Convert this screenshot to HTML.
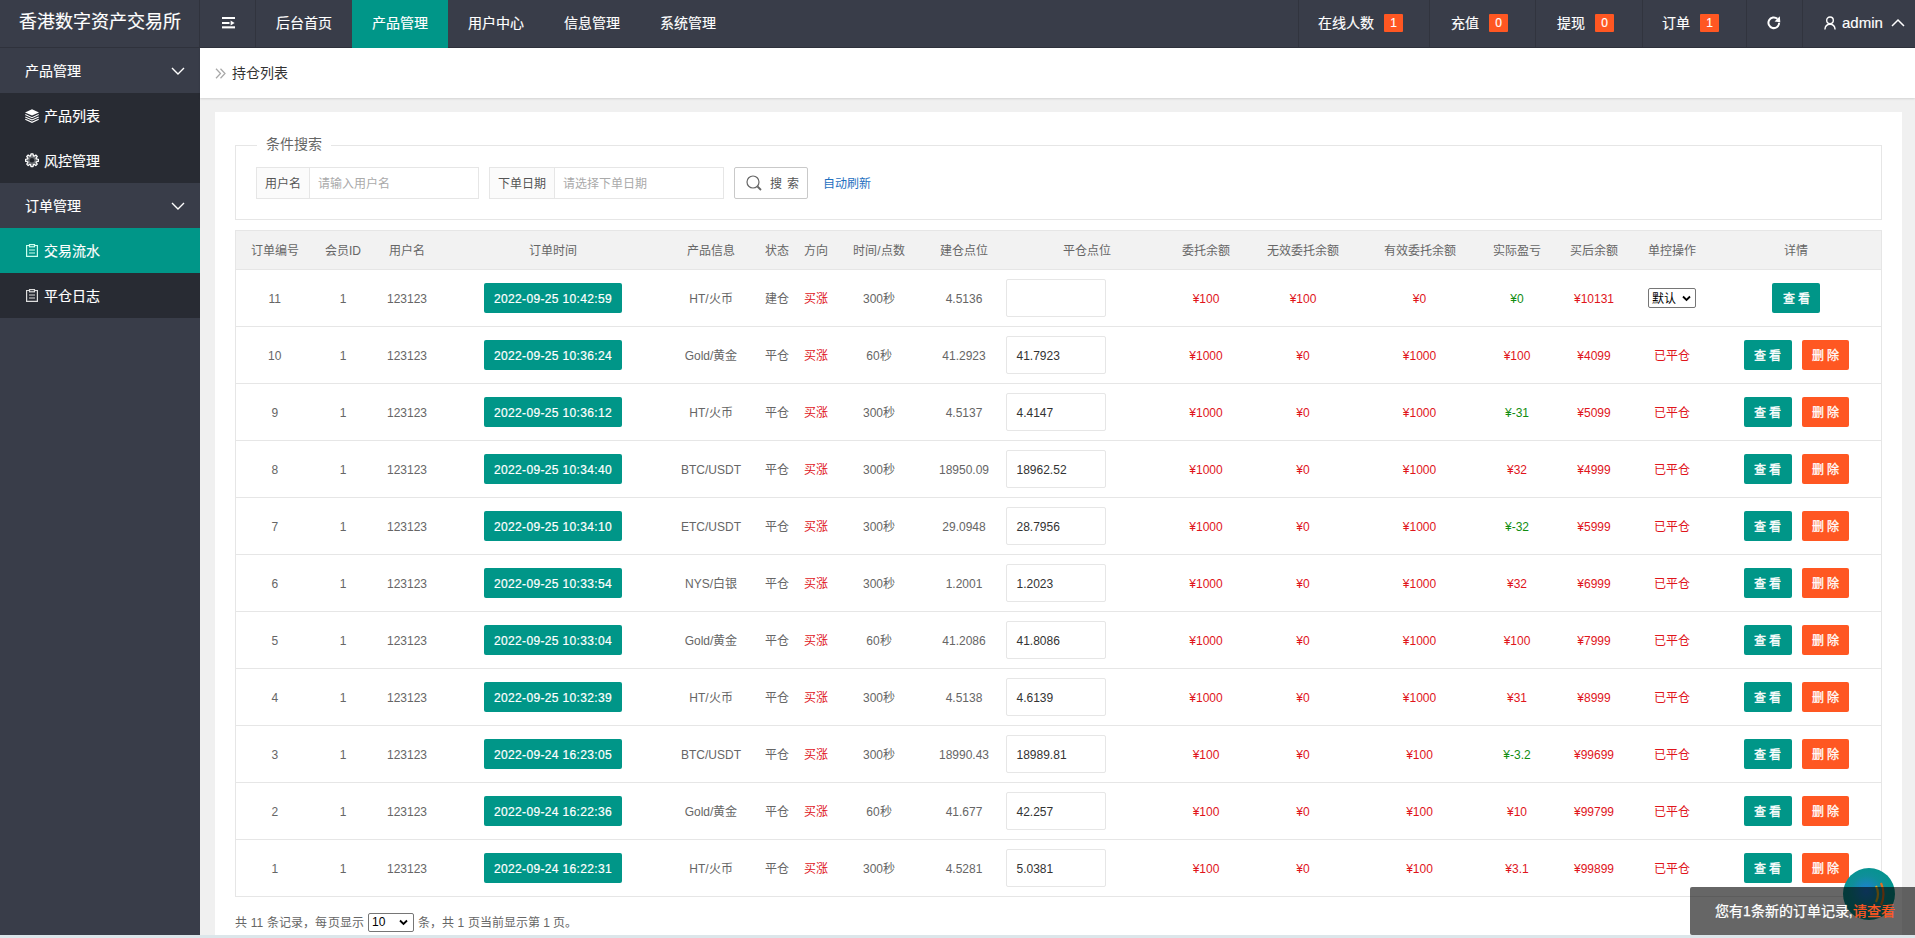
<!DOCTYPE html>
<html lang="zh-CN"><head><meta charset="utf-8">
<style>
*{box-sizing:border-box;margin:0;padding:0}
html,body{width:1915px;height:938px;overflow:hidden}
body{font-family:"Liberation Sans",sans-serif;background:#f0f0f0;position:relative;color:#666;font-size:12px}
td,th{line-height:16px}
.hdr{-webkit-text-stroke:0.15px #fff;position:absolute;left:0;top:0;width:1915px;height:48px;background:#393d49;border-bottom:1px solid #2f323c}
.logo{position:absolute;left:0;top:0;width:200px;height:47px;color:#fff;font-size:18px;line-height:45px;padding-left:19px;white-space:nowrap}
.hdr .sep{position:absolute;top:0;width:1px;height:47px;background:#31343e}
.nav{position:absolute;top:0;height:47px;color:#fff;font-size:14px;line-height:46px;text-align:center;white-space:nowrap}
.nav.on{background:#009688;height:48px}
.badge{position:absolute;top:14px;width:19px;height:18px;background:#ff5722;color:#fff;font-size:12px;line-height:18px;text-align:center;border-radius:1px}
.tx{position:absolute;top:0;line-height:46px;color:#fff;font-size:14px;white-space:nowrap}
.side{position:absolute;left:0;top:48px;width:200px;height:890px;background:#393d49}
.side .it{-webkit-text-stroke:0.15px #fff;position:absolute;left:0;width:200px;height:45px;line-height:47px;color:#fff;font-size:14px;padding-left:25px;white-space:nowrap}
.side .child{background:#282b33}
.side .on{background:#009688}
.side svg{position:absolute}
.crumb{position:absolute;left:200px;top:48px;width:1715px;height:50px;background:#fff;box-shadow:0 1px 2px rgba(0,0,0,.12)}
.crumb span{position:absolute;left:32px;top:1px;line-height:49px;font-size:14px;color:#333}
.card{position:absolute;left:215px;top:112px;width:1687px;height:830px;background:#fff}
.fs{position:absolute;left:20px;top:33px;width:1647px;height:75px;border:1px solid #e6e6e6}
.legend{position:absolute;left:42px;top:24px;background:#fff;padding:0 9px;font-size:14px;color:#666;line-height:17px}
.ig{position:absolute;top:55px;height:32px;border:1px solid #e6e6e6;font-size:12px}
.ig .lb{position:absolute;left:0;top:0;height:30px;line-height:32px;background:#fbfbfb;border-right:1px solid #e6e6e6;text-align:center;color:#555}
.ig .ph{position:absolute;top:0;line-height:32px;color:#aaa}
.sbtn{position:absolute;left:519px;top:55px;width:74px;height:32px;border:1px solid #c9c9c9;border-radius:2px;color:#555;font-size:13px;line-height:30px}
.auto{position:absolute;left:608px;top:56px;line-height:32px;color:#1e6fbf;font-size:12px}
table{position:absolute;left:20px;top:118px;border-collapse:collapse;table-layout:fixed;width:1647px}
td,th{text-align:center;padding:0;font-weight:normal;font-size:12px;color:#666;white-space:nowrap;border-bottom:1px solid #e6e6e6}
th{height:39px;background:#f2f2f2;padding-top:1px}
td{height:57px;padding-top:2px}
table{border:1px solid #e6e6e6}
.dt{display:inline-block;position:relative;top:-1px;width:138px;height:30px;line-height:32px;-webkit-text-stroke:0.2px #fff;background:#009688;color:#fff;border-radius:2px;font-size:12px;letter-spacing:.35px}
.red{color:#e0151b}
.grn{color:#118d11}
.inp{display:block;position:relative;top:-1px;width:100px;height:38px;border:1px solid #e6e6e6;border-radius:2px;margin-left:0;text-align:left;padding-left:10px;line-height:38px;color:#333;font-size:12px}
.b{display:inline-block;position:relative;top:-1px;width:48px;height:30px;line-height:32px;color:#fff;border-radius:2px;font-size:12px;letter-spacing:3px;text-indent:3px;-webkit-text-stroke:0.3px #fff}
.bt{background:#009688}
.bo{background:#ff5722;margin-left:10px;width:47px}
td.det{padding-right:2px}
.sel{display:inline-block;top:-1px;width:48px;height:20px;border:1px solid #767676;border-radius:2px;color:#000;text-align:left;line-height:20px;padding-left:3px;font-size:12px;position:relative;vertical-align:middle}
.fsel{position:absolute;left:153px;top:801px;width:46px;height:19px;border:1px solid #767676;border-radius:2px;color:#000;line-height:17px;padding-left:3px;font-size:12px}
.foot{position:absolute;top:802px;font-size:12px;color:#666;line-height:18px;white-space:nowrap}
.toast{-webkit-text-stroke:0.25px currentColor;position:absolute;left:1690px;top:887px;width:240px;height:48px;background:rgba(0,0,0,.6);color:#fff;font-size:14px;line-height:48px;padding-left:25px;border-radius:2px;white-space:nowrap}
.bottombar{position:absolute;left:0;top:935px;width:1915px;height:3px;background:#dce6ea}
</style></head><body>
<div class="hdr">
  <div class="logo">香港数字资产交易所</div>
  <div class="sep" style="left:199px;background:#30333d"></div>
  <div class="sep" style="left:255px"></div>
  <svg style="position:absolute;left:222px;top:17px" width="14" height="12" viewBox="0 0 14 12"><rect x="0" y="0" width="13" height="2" fill="#fff"/><rect x="0" y="5" width="7.5" height="2" fill="#fff"/><rect x="0" y="9.3" width="13" height="2.1" fill="#fff"/><path d="M8.6 3.4 L12.6 6 L8.6 8.6Z" fill="#fff"/></svg>
  <div class="nav" style="left:256px;width:96px">后台首页</div>
  <div class="nav on" style="left:352px;width:96px">产品管理</div>
  <div class="nav" style="left:448px;width:96px">用户中心</div>
  <div class="nav" style="left:544px;width:96px">信息管理</div>
  <div class="nav" style="left:640px;width:96px">系统管理</div>
  <div class="sep" style="left:1298px"></div>
  <div class="tx" style="left:1318px">在线人数</div><div class="badge" style="left:1384px">1</div>
  <div class="sep" style="left:1429px"></div>
  <div class="tx" style="left:1451px">充值</div><div class="badge" style="left:1489px">0</div>
  <div class="sep" style="left:1535px"></div>
  <div class="tx" style="left:1557px">提现</div><div class="badge" style="left:1595px">0</div>
  <div class="sep" style="left:1642px"></div>
  <div class="tx" style="left:1662px">订单</div><div class="badge" style="left:1700px">1</div>
  <div class="sep" style="left:1746px"></div>
  <svg style="position:absolute;left:1767px;top:16px" width="14" height="14" viewBox="0 0 14 14"><path d="M12.15 6.75 A5.35 5.35 0 1 1 10.4 2.8" fill="none" stroke="#fff" stroke-width="2"/><path d="M12.8 0.3 L13.3 6.3 L7.6 5.6Z" fill="#fff"/></svg>
  <div class="sep" style="left:1802px"></div>
  <svg style="position:absolute;left:1824px;top:16px" width="12" height="14" viewBox="0 0 12 14"><circle cx="6" cy="4.3" r="3.3" fill="none" stroke="#fff" stroke-width="1.4"/><path d="M0.9 13.5 C1.2 9.8 3.4 8.3 6 8.3 C8.6 8.3 10.8 9.8 11.1 13.5" fill="none" stroke="#fff" stroke-width="1.4"/></svg>
  <div class="tx" style="left:1842px;font-size:15px">admin</div>
  <svg style="position:absolute;left:1891px;top:18px" width="14" height="9" viewBox="0 0 14 9"><path d="M1 8 L7 2 L13 8" fill="none" stroke="#fff" stroke-width="1.5"/></svg>
</div>

<div class="side">
  <div class="it" style="top:0">产品管理<svg style="left:171px;top:19px" width="14" height="8" viewBox="0 0 14 8"><path d="M1 1 L7 7 L13 1" fill="none" stroke="#fff" stroke-width="1.4"/></svg></div>
  <div class="it child" style="top:45px;padding-left:44px">产品列表<svg style="left:25px;top:16px" width="14" height="14" viewBox="0 0 14 14"><path d="M7 0.3 L14 3.4 L7 6.6 L0 3.4Z" fill="#fff"/><g fill="none" stroke="#fff" stroke-width="1.1"><path d="M0.3 5.6 L7 8.7 L13.7 5.6"/><path d="M0.3 7.9 L7 11 L13.7 7.9"/><path d="M0.3 10.2 L7 13.3 L13.7 10.2"/></g></svg></div>
  <div class="it child" style="top:90px;padding-left:44px">风控管理<svg style="left:25px;top:15px" width="14" height="15" viewBox="0 0 14 15"><path d="M5.54 3.04 L5.96 0.88 L8.04 0.88 L8.46 3.04 L8.98 3.26 L10.81 2.03 L12.27 3.49 L11.04 5.32 L11.26 5.84 L13.42 6.26 L13.42 8.34 L11.26 8.76 L11.04 9.28 L12.27 11.11 L10.81 12.57 L8.98 11.34 L8.46 11.56 L8.04 13.72 L5.96 13.72 L5.54 11.56 L5.02 11.34 L3.19 12.57 L1.73 11.11 L2.96 9.28 L2.74 8.76 L0.58 8.34 L0.58 6.26 L2.74 5.84 L2.96 5.32 L1.73 3.49 L3.19 2.03 L5.02 3.26Z" fill="rgba(255,255,255,0.3)" stroke="#fff" stroke-width="1.2" stroke-linejoin="round"/><circle cx="7" cy="7.3" r="2.3" fill="#1f2229"/></svg></div>
  <div class="it" style="top:135px">订单管理<svg style="left:171px;top:19px" width="14" height="8" viewBox="0 0 14 8"><path d="M1 1 L7 7 L13 1" fill="none" stroke="#fff" stroke-width="1.4"/></svg></div>
  <div class="it child on" style="top:180px;padding-left:44px">交易流水<svg style="left:26px;top:16px" width="12" height="13" viewBox="0 0 12 13"><g fill="none" stroke="#cfe" stroke-width="1.2"><path d="M3.5 1.5 H0.6 V12.4 H11.4 V1.5 H8.5"/><rect x="3.5" y="0.6" width="5" height="2.2"/><path d="M3 6 H9 M3 9 H9"/></g></svg></div>
  <div class="it child" style="top:225px;padding-left:44px">平仓日志<svg style="left:26px;top:16px" width="12" height="13" viewBox="0 0 12 13"><g fill="none" stroke="#ddd" stroke-width="1.2"><path d="M3.5 1.5 H0.6 V12.4 H11.4 V1.5 H8.5"/><rect x="3.5" y="0.6" width="5" height="2.2"/><path d="M3 6 H9 M3 9 H9"/></g></svg></div>
</div>

<div class="crumb">
  <svg style="position:absolute;left:15px;top:20px" width="12" height="11" viewBox="0 0 12 11"><path d="M1 0.7 L5.5 5.5 L1 10.3 M5.5 0.7 L10 5.5 L5.5 10.3" fill="none" stroke="#a8a8a8" stroke-width="1.25"/></svg>
  <span>持仓列表</span>
</div>

<div class="card">
  <div class="fs"></div>
  <div class="legend">条件搜索</div>
  <div class="ig" style="left:41px;width:223px"><div class="lb" style="width:53px">用户名</div><div class="ph" style="left:61px">请输入用户名</div></div>
  <div class="ig" style="left:274px;width:235px"><div class="lb" style="width:65px">下单日期</div><div class="ph" style="left:73px">请选择下单日期</div></div>
  <div class="sbtn"><svg style="position:absolute;left:11px;top:7px" width="17" height="17" viewBox="0 0 17 17"><circle cx="7" cy="7" r="6" fill="none" stroke="#666" stroke-width="1.2"/><path d="M11.5 11.5 L15 15" stroke="#666" stroke-width="1.8"/></svg><span style="position:absolute;left:35px;top:1px;letter-spacing:5px;font-size:12px">搜索</span></div>
  <div class="auto">自动刷新</div>

  <table>
    <colgroup>
      <col style="width:78px"><col style="width:59px"><col style="width:69px"><col style="width:223px"><col style="width:93px"><col style="width:39px"><col style="width:39px"><col style="width:87px"><col style="width:83px"><col style="width:163px"><col style="width:75px"><col style="width:119px"><col style="width:114px"><col style="width:81px"><col style="width:73px"><col style="width:83px"><col>
    </colgroup>
    <tr><th>订单编号</th><th>会员ID</th><th>用户名</th><th>订单时间</th><th>产品信息</th><th>状态</th><th>方向</th><th>时间/点数</th><th>建仓点位</th><th>平仓点位</th><th>委托余额</th><th>无效委托余额</th><th>有效委托余额</th><th>实际盈亏</th><th>买后余额</th><th>单控操作</th><th style="padding-right:2px">详情</th></tr>
    <tr><td>11</td><td>1</td><td>123123</td><td><span class="dt">2022-09-25 10:42:59</span></td><td>HT/火币</td><td>建仓</td><td class="red">买涨</td><td>300秒</td><td>4.5136</td><td><span class="inp"></span></td><td class="red">¥100</td><td class="red">¥100</td><td class="red">¥0</td><td class="grn">¥0</td><td class="red">¥10131</td><td><span class="sel">默认<svg style="position:absolute;right:4px;top:6px" width="9" height="7" viewBox="0 0 9 7"><path d="M1 1.5 L4.5 5 L8 1.5" fill="none" stroke="#000" stroke-width="1.8"/></svg></span></td><td class="det"><span class="b bt">查看</span></td></tr>
<tr><td>10</td><td>1</td><td>123123</td><td><span class="dt">2022-09-25 10:36:24</span></td><td>Gold/黄金</td><td>平仓</td><td class="red">买涨</td><td>60秒</td><td>41.2923</td><td><span class="inp">41.7923</span></td><td class="red">¥1000</td><td class="red">¥0</td><td class="red">¥1000</td><td class="red">¥100</td><td class="red">¥4099</td><td><span class="red">已平仓</span></td><td class="det"><span class="b bt">查看</span><span class="b bo">删除</span></td></tr>
<tr><td>9</td><td>1</td><td>123123</td><td><span class="dt">2022-09-25 10:36:12</span></td><td>HT/火币</td><td>平仓</td><td class="red">买涨</td><td>300秒</td><td>4.5137</td><td><span class="inp">4.4147</span></td><td class="red">¥1000</td><td class="red">¥0</td><td class="red">¥1000</td><td class="grn">¥-31</td><td class="red">¥5099</td><td><span class="red">已平仓</span></td><td class="det"><span class="b bt">查看</span><span class="b bo">删除</span></td></tr>
<tr><td>8</td><td>1</td><td>123123</td><td><span class="dt">2022-09-25 10:34:40</span></td><td>BTC/USDT</td><td>平仓</td><td class="red">买涨</td><td>300秒</td><td>18950.09</td><td><span class="inp">18962.52</span></td><td class="red">¥1000</td><td class="red">¥0</td><td class="red">¥1000</td><td class="red">¥32</td><td class="red">¥4999</td><td><span class="red">已平仓</span></td><td class="det"><span class="b bt">查看</span><span class="b bo">删除</span></td></tr>
<tr><td>7</td><td>1</td><td>123123</td><td><span class="dt">2022-09-25 10:34:10</span></td><td>ETC/USDT</td><td>平仓</td><td class="red">买涨</td><td>300秒</td><td>29.0948</td><td><span class="inp">28.7956</span></td><td class="red">¥1000</td><td class="red">¥0</td><td class="red">¥1000</td><td class="grn">¥-32</td><td class="red">¥5999</td><td><span class="red">已平仓</span></td><td class="det"><span class="b bt">查看</span><span class="b bo">删除</span></td></tr>
<tr><td>6</td><td>1</td><td>123123</td><td><span class="dt">2022-09-25 10:33:54</span></td><td>NYS/白银</td><td>平仓</td><td class="red">买涨</td><td>300秒</td><td>1.2001</td><td><span class="inp">1.2023</span></td><td class="red">¥1000</td><td class="red">¥0</td><td class="red">¥1000</td><td class="red">¥32</td><td class="red">¥6999</td><td><span class="red">已平仓</span></td><td class="det"><span class="b bt">查看</span><span class="b bo">删除</span></td></tr>
<tr><td>5</td><td>1</td><td>123123</td><td><span class="dt">2022-09-25 10:33:04</span></td><td>Gold/黄金</td><td>平仓</td><td class="red">买涨</td><td>60秒</td><td>41.2086</td><td><span class="inp">41.8086</span></td><td class="red">¥1000</td><td class="red">¥0</td><td class="red">¥1000</td><td class="red">¥100</td><td class="red">¥7999</td><td><span class="red">已平仓</span></td><td class="det"><span class="b bt">查看</span><span class="b bo">删除</span></td></tr>
<tr><td>4</td><td>1</td><td>123123</td><td><span class="dt">2022-09-25 10:32:39</span></td><td>HT/火币</td><td>平仓</td><td class="red">买涨</td><td>300秒</td><td>4.5138</td><td><span class="inp">4.6139</span></td><td class="red">¥1000</td><td class="red">¥0</td><td class="red">¥1000</td><td class="red">¥31</td><td class="red">¥8999</td><td><span class="red">已平仓</span></td><td class="det"><span class="b bt">查看</span><span class="b bo">删除</span></td></tr>
<tr><td>3</td><td>1</td><td>123123</td><td><span class="dt">2022-09-24 16:23:05</span></td><td>BTC/USDT</td><td>平仓</td><td class="red">买涨</td><td>300秒</td><td>18990.43</td><td><span class="inp">18989.81</span></td><td class="red">¥100</td><td class="red">¥0</td><td class="red">¥100</td><td class="grn">¥-3.2</td><td class="red">¥99699</td><td><span class="red">已平仓</span></td><td class="det"><span class="b bt">查看</span><span class="b bo">删除</span></td></tr>
<tr><td>2</td><td>1</td><td>123123</td><td><span class="dt">2022-09-24 16:22:36</span></td><td>Gold/黄金</td><td>平仓</td><td class="red">买涨</td><td>60秒</td><td>41.677</td><td><span class="inp">42.257</span></td><td class="red">¥100</td><td class="red">¥0</td><td class="red">¥100</td><td class="red">¥10</td><td class="red">¥99799</td><td><span class="red">已平仓</span></td><td class="det"><span class="b bt">查看</span><span class="b bo">删除</span></td></tr>
<tr><td>1</td><td>1</td><td>123123</td><td><span class="dt">2022-09-24 16:22:31</span></td><td>HT/火币</td><td>平仓</td><td class="red">买涨</td><td>300秒</td><td>4.5281</td><td><span class="inp">5.0381</span></td><td class="red">¥100</td><td class="red">¥0</td><td class="red">¥100</td><td class="red">¥3.1</td><td class="red">¥99899</td><td><span class="red">已平仓</span></td><td class="det"><span class="b bt">查看</span><span class="b bo">删除</span></td></tr>
  </table>
  <div class="foot" style="left:20px;letter-spacing:0.15px">共 11 条记录，每页显示</div><span class="fsel">10<svg style="position:absolute;right:5px;top:5px" width="9" height="7" viewBox="0 0 9 7"><path d="M1 1.5 L4.5 5 L8 1.5" fill="none" stroke="#000" stroke-width="1.8"/></svg></span><div class="foot" style="left:203px;letter-spacing:0.05px">条，共 1 页当前显示第 1 页。</div>
</div>

<svg style="position:absolute;left:1843px;top:868px" width="52" height="52" viewBox="0 0 52 52"><defs><radialGradient id="g1" cx="0.45" cy="0.45" r="0.6"><stop offset="0" stop-color="#1f7fd8"/><stop offset="0.5" stop-color="#0f8f9a"/><stop offset="1" stop-color="#009688"/></radialGradient></defs><circle cx="26" cy="26" r="26" fill="url(#g1)"/><path d="M33 18 Q37 26 33 34" fill="none" stroke="#e0b020" stroke-width="2.2"/><path d="M38 15 Q43 26 38 37" fill="none" stroke="#e07020" stroke-width="2.2"/></svg>
<div class="toast">您有1条新的订单记录,<span style="color:#ff5722">请查看</span></div>
<div class="bottombar"></div>
</body></html>
